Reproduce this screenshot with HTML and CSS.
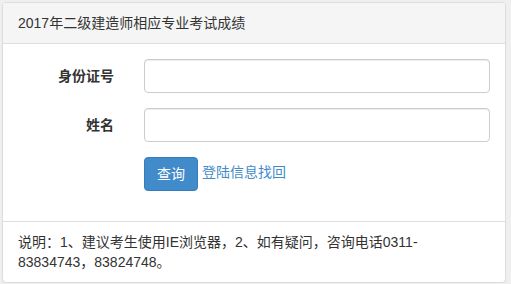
FILE: index.html
```html
<!DOCTYPE html>
<html>

<head>
    <meta charset="utf-8">
    <title>成绩查询</title>
    <link rel="stylesheet" href="styles.css">
</head>

<body>
    <div class="panel">
        <div class="panel-heading">2017年二级建造师相应专业考试成绩</div>

        <div class="panel-body">
            <form class="query-form">
                <div class="form-row">
                    <label for="idcard">身份证号</label>
                    <div class="field"><input type="text" id="idcard" name="idcard"></div>
                </div>
                <div class="form-row">
                    <label for="name">姓名</label>
                    <div class="field"><input type="text" id="name" name="name"></div>
                </div>
                <div class="form-row">
                    <span class="spacer"></span>
                    <div class="field actions">
                        <button type="submit">查询</button>
                        <a href="#" class="recover">登陆信息找回</a>
                    </div>
                </div>
            </form>
        </div>

        <div class="panel-footer">
            说明：1、建议考生使用IE浏览器，2、如有疑问，咨询电话0311-83834743，83824748。
        </div>
    </div>
</body>

</html>
```

FILE: styles.css
```css
/* Page */
body {
    margin: 0;
    padding: 2px 0 0 2px;
    background-color: #efefef;
    font-family: "Liberation Sans", "Noto Sans CJK SC", sans-serif;
    font-size: 14px;
    line-height: 20px;
    color: #333;
}

.panel {
    width: 504px;
    box-sizing: border-box;
    background-color: #fff;
    border: 1px solid #ddd;
    border-radius: 4px;
    box-shadow: 0 1px 1px rgba(0, 0, 0, 0.05);
}

.panel-heading {
    padding: 10px 15px;
    background-color: #f5f5f5;
    border-bottom: 1px solid #ddd;
    border-radius: 3px 3px 0 0;
}

.panel-body {
    padding: 15px;
}

/* Form */
.form-row {
    display: flex;
    margin: 0 -15px 15px;
}

.form-row label,
.form-row .spacer {
    width: 126px;
    box-sizing: border-box;
    padding: 7px 15px 0;
    text-align: right;
    font-weight: bold;
}

.field {
    flex: 1;
    padding: 0 15px;
}

input {
    display: block;
    width: 100%;
    height: 34px;
    box-sizing: border-box;
    padding: 6px 12px;
    border: 1px solid #ccc;
    border-radius: 4px;
    box-shadow: inset 0 1px 1px rgba(0, 0, 0, 0.075);
    font-size: 14px;
}

.actions {
    display: flex;
    align-items: center;
    gap: 4px;
}

button {
    height: 34px;
    padding: 6px 12px;
    background-color: #428bca;
    border: 1px solid #357ebd;
    border-radius: 4px;
    color: #fff;
    font-family: inherit;
    font-size: 14px;
    line-height: 20px;
    cursor: pointer;
}

.recover {
    color: #428bca;
    text-decoration: none;
    margin-top: -4px;
}

.panel-footer {
    padding: 10px 15px;
    border-top: 1px solid #ddd;
}
```
